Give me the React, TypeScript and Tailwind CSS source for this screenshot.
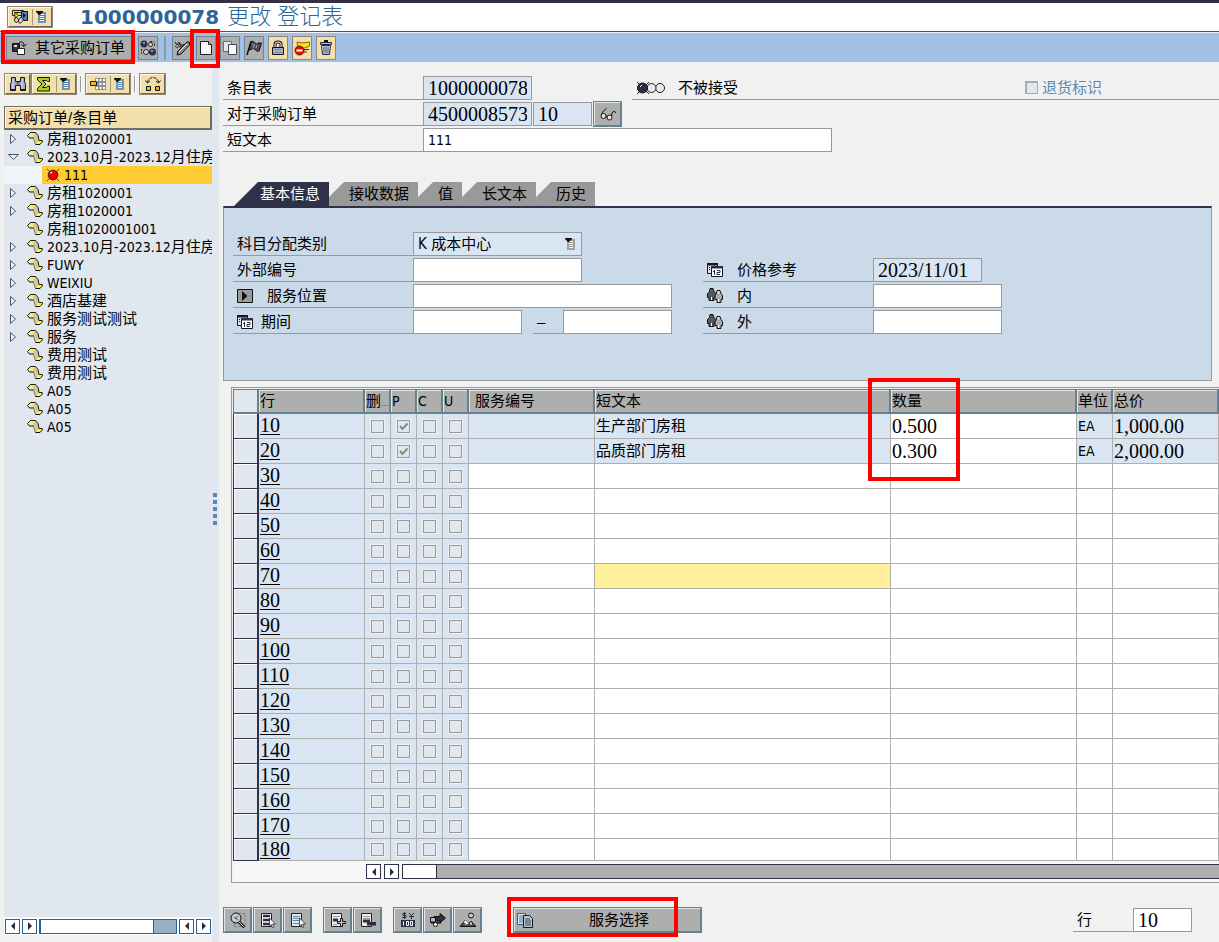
import type { ReactNode } from "react"
import clsx from "clsx"

const latinFont = "[font-family:'DejaVu_Sans_Condensed','Noto_Sans','Noto_Sans_CJK_SC',sans-serif]"
const serifFont = "[font-family:'Liberation_Serif','Noto_Sans_CJK_SC',serif]"

// latin runs are set a size smaller than the chinese around them
function Mixed({ text }: { text: string }) {
  return (
    <>
      {text.split(/([!-~]+)/).map((part, i) =>
        i % 2 ? <span key={i} className={clsx(latinFont, "text-sm leading-none")}>{part}</span> : part
      )}
    </>
  )
}

function Icon({ children, className = "size-4" }: { children: ReactNode; className?: string }) {
  return (
    <svg viewBox="0 0 16 16" className={clsx("shrink-0", className)} fill="none" aria-hidden="true">
      {children}
    </svg>
  )
}

/* ---------- icons ---------- */

const ServicesIcon = () => (
  <Icon>
    <path d="M.5 1.500h11v5H6l-3 3v-3H.5z" fill="#ffe92e" stroke="#222" />
    <path d="M2 3.500h7M2 5h4" stroke="#222" />
    <path d="M9.500 2.500h6v9h-6z" fill="#4a86bd" stroke="#111" />
    <path d="M11 4v5l3-2.500z" fill="#111" />
    <path d="M4.500 8l2.500 3-2.500 3-2.500-3zM9 8l2.500 3L8 14.500 6 12z" fill="#d5d5dd" stroke="#222" />
  </Icon>
)

const ListIcon = ({ muted = false }: { muted?: boolean }) => (
  <Icon>
    <path d="M6 4h6v9H6z" fill="#fff" stroke={muted ? "#a0a0a0" : "#6d93b5"} strokeWidth="2" />
    <path d="M7 6.500h4M7 8.500h4M7 10.500h4" stroke={muted ? "#999" : "#4d7ba5"} />
    <path d="M3 2h7v1L7 6H6L3 3z" fill="#111" />
  </Icon>
)

const OtherOrderIcon = () => (
  <Icon>
    <path d="M1.500 3.500h7v8h-7z" fill="#303048" stroke="#111" />
    <path d="M3 5h3v2H3z" fill="#ddd" />
    <path d="M6.500 8.500h7v6h-7z" fill="#fff" stroke="#222" />
    <path d="M8 2.500q4-2 5 2v2M10.500 4.500l2.500 2 2.500-2.500" stroke="#111" />
  </Icon>
)

const ToggleIcon = () => (
  <Icon>
    <circle cx="4" cy="4" r="3.500" fill="#2d3048" />
    <circle cx="12.500" cy="12" r="3.500" fill="#2d3048" />
    <circle cx="6" cy="12" r="2.500" fill="#d8dbe6" stroke="#222" />
    <circle cx="10.500" cy="4.500" r="2" fill="#d8dbe6" stroke="#222" />
    <path d="M3 3h2M11 11h2" stroke="#fff" />
    <path d="M10 1.500h3l1.500 1.500v4M1.500 9v4l1.500 1.500" stroke="#222" strokeDasharray="2 1" />
  </Icon>
)

const EditIcon = () => (
  <Icon>
    <path d="M1 2l2 3 2-3 2 4 3-2M1 6l3 2" stroke="#222" />
    <circle cx="6" cy="5.500" r="1.500" stroke="#222" />
    <path d="M15.500 2l-2.500 0-9 9-1 4 4-1 8.500-9z" fill="#8c8c9a" stroke="#111" />
    <path d="M5 12l8-8" stroke="#e5e5ea" />
  </Icon>
)

const PageIcon = () => (
  <Icon>
    <path d="M2.500 1.500h8l3 3v10h-11z" fill="#f6f8fb" stroke="#1d1d2b" />
    <path d="M10.500 1.500v3h3" fill="#bfc5ce" stroke="#1d1d2b" />
  </Icon>
)

const CopyIcon = () => (
  <Icon>
    <path d="M1.500 1.500h8v10h-8z" fill="#e4e8ee" stroke="#5a7180" />
    <path d="M6.500 4.500h8v10h-8z" fill="#f6f8fb" stroke="#3b4c58" />
  </Icon>
)

const FlagIcon = () => (
  <Icon>
    <path d="M5 1.500q2-1 4 1.500t3 0h3.500l-2.500 8q-2 1-4-1.500t-3.500 0L3 10z" fill="#4a4d64" stroke="#111" />
    <path d="M5 1.500L1 15" stroke="#111" strokeWidth="1.500" />
    <path d="M6 4l2.500.5-1.500 4M11 5l-1 3" stroke="#9aa0ac" />
  </Icon>
)

const LockIcon = () => (
  <Icon>
    <path d="M5 7V4q0-2 3-2t3 2v3" stroke="#111" strokeWidth="3" />
    <path d="M5 7V4q0-2 3-2t3 2v3" stroke="#fff" />
    <path d="M2.500 7.500h11v7h-11z" fill="#a9adc9" stroke="#111" />
    <path d="M4 9.500h8M4 12.500h8" stroke="#8286a8" />
  </Icon>
)

const RejectIcon = () => (
  <Icon>
    <path d="M3 2l6 1 6.500-1v4l-5 2H4z" fill="#ffe11a" stroke="#7d6a00" />
    <path d="M10 9.500h5M10 12h3" stroke="#333" />
    <circle cx="5.500" cy="10.500" r="4.500" fill="#e01010" stroke="#8a0000" />
    <path d="M2.500 9.500h6v2h-6z" fill="#fff" />
  </Icon>
)

const TrashIcon = () => (
  <Icon>
    <path d="M6 1h4" stroke="#111" strokeWidth="2" />
    <path d="M2.500 2.500h11v2h-11z" fill="#b9bdd2" stroke="#222b4a" />
    <path d="M3.500 5.500h9l-1 9h-7z" fill="#dfe3ee" stroke="#222b4a" />
    <path d="M6 6.500v7M8 6.500v7M10 6.500v7" stroke="#39425f" />
  </Icon>
)

const BinocularsIcon = () => (
  <Icon>
    <path d="M1.500 1.500h4v4h5v-4h4v4l1 3v6h-5v-5h-5v5h-5v-6l1-3z" fill="#a3abd2" stroke="#16161f" />
    <path d="M3 3v11M12 3v11" stroke="#d9ddf2" />
    <path d="M6.500 6h3v2.500h-3z" fill="#5b6184" />
    <path d="M1 13.500h4.500M10.500 13.500h4.500" stroke="#16161f" />
  </Icon>
)

const SigmaIcon = () => (
  <Icon>
    <path d="M1.500 1.500h12v4h-2l-1-1h-4l3.500 3.500-3.500 3.500h4l1-1.500h2v5h-12v-2.500l4.500-4.500-4.500-4z" fill="#a8cf28" stroke="#111c00" />
  </Icon>
)

const GridIcon = () => (
  <Icon>
    <path d="M5 2h11v12H5z" fill="#8d8f96" />
    <path d="M6 3h2v2H6zM9.500 3h2v2h-2zM13 3h2v2h-2zM6 11h2v2H6zM9.500 11h2v2h-2zM13 11h2v2h-2zM9.500 7h2v2h-2zM13 7h2v2h-2z" fill="#fff" />
    <path d="M.5 5.500h6v4h-6z" fill="#ffb400" stroke="#222" />
  </Icon>
)

const SwapIcon = () => (
  <Icon>
    <path d="M2.500 6q1-4 5.500-4.500 4.500.5 5.500 4.500" stroke="#111" strokeDasharray="3 1" />
    <path d="M.5 4.500l2 2.500 2.500-2M11 5l2.500 2 2-2.500" stroke="#111" />
    <path d="M1.500 10.500h4v4h-4z" fill="#b5dc2c" stroke="#111" />
    <path d="M10.500 10.500h4v4h-4z" fill="#ffa400" stroke="#111" />
  </Icon>
)

const ScrollIcon = () => (
  <Icon>
    <path d="M6 2l3 .5 2 3.500 1 4-3 3.500-1.500-5-1.500-2.500z" fill="#d3cb97" />
    <path d="M6.500 6L7 9l1.500 4.500" stroke="#77734e" />
    <path d="M1 4.500l3-3h4L6 4l.5 2-2-1.500z" fill="#fff63a" />
    <path d="M9 13.500l2.500-3.500 4-.5-2 3.500z" fill="#fff63a" />
    <path d="M.5 4.500l3-3h5l2.500 3 1 5h3.500M.5 4.500l2 2.500H6M8.500 13.500h4.500l3-3.500" stroke="#111" />
  </Icon>
)

const RedBallIcon = () => (
  <Icon className="size-3.5">
    <path d="M1 1l14 14M15 1L1 15" stroke="#333" />
    <circle cx="8" cy="8" r="5.500" fill="#f00000" stroke="#4a0000" />
    <path d="M5 6l2-1.500" stroke="#fff" strokeWidth="1.500" />
  </Icon>
)

const LightsIcon = () => (
  <svg viewBox="0 0 30 14" className="h-3.5 w-[30px]" fill="none" aria-hidden="true">
    <path d="M1 1l12 12M13 1L1 13" stroke="#222" />
    <circle cx="24" cy="7" r="4.500" fill="#e7eaef" stroke="#222" />
    <circle cx="15.500" cy="7" r="4.500" fill="#e7eaef" stroke="#222" />
    <circle cx="6.500" cy="7" r="5" fill="#2b2e45" stroke="#111" />
    <path d="M4 6l2-2" stroke="#fff" />
  </svg>
)

const GlassesIcon = () => (
  <Icon>
    <circle cx="3.500" cy="10" r="2.500" fill="#e8e8e8" stroke="#111" />
    <circle cx="9.500" cy="11.500" r="2.500" fill="#e8e8e8" stroke="#111" />
    <path d="M1.500 8q1-3 5-5.500M11.500 10q0-4 2-4.500t2 1.500M6 10l1.500 1" stroke="#111" />
  </Icon>
)

const CalendarIcon = () => (
  <Icon>
    <path d="M.5 1.500h10v10H.5z" fill="#dfe3ec" stroke="#16161f" />
    <path d="M0 1h11v2.500H0zM2 5h1v1H2zM2 7h1v1H2z" fill="#16161f" />
    <path d="M4.500 4.500h11v10h-11z" fill="#fff" stroke="#16161f" />
    <path d="M4 4h12v2.500H4z" fill="#2b2e45" />
    <path d="M7.500 8v5M6 9.500h1.500M10 8.500h3v2h-3v2h3" stroke="#2b2e45" />
  </Icon>
)

const PeopleIcon = () => (
  <Icon>
    <path d="M3 .5h3l1 3 2 2v4H7v3H2v-3H.5v-4l2-2z" fill="#55575f" stroke="#111" />
    <path d="M10 2.500h3l1 3 1.500 2v4H14v3h-4v-3H8v-4l1.500-2z" fill="#a9abb2" stroke="#111" />
    <path d="M4.500 9v3M11.500 11v3" stroke="#fff" />
    <path d="M10.500 3.500h2v2h-2z" fill="#f1efe7" />
  </Icon>
)

const PlayIcon = () => (
  <Icon>
    <path d="M.5 1.500h15v13H.5z" fill="#9b9b99" stroke="#111" />
    <path d="M5 3v10l5.500-5z" fill="#111" />
  </Icon>
)

const DetailIcon = () => (
  <Icon>
    <path d="M4 1.500h11v13H4z" stroke="#6c8795" strokeDasharray="3 1" />
    <path d="M8 9l6.500 6.500" stroke="#111" strokeWidth="3" />
    <path d="M9 10l5.500 5.500" stroke="#e5e5e5" />
    <circle cx="6" cy="6" r="5" fill="#c3c8cc" stroke="#111" />
    <path d="M4 5l4 3M5 7l3-3" stroke="#556" />
  </Icon>
)

const SelectAllIcon = ({ dark = false }: { dark?: boolean }) => (
  <Icon>
    <path d="M1.500 1.500h10v13h-10z" fill={dark ? "#fff" : "#dfe9f1"} stroke="#222" />
    {dark
      ? <path d="M3 4h7M3 8h7M3 12h6" stroke="#2b2e45" strokeWidth="2.500" />
      : <path d="M3 4.500h7M3 6.500h7M3 8.500h7M3 11.500h6" stroke="#5d87a4" />}
    <path d="M9.500 6l6 6h-3l1.500 3-1.500.5-1.500-3-1.500 1.500z" fill="#fff" stroke="#111" strokeWidth=".7" />
  </Icon>
)

const InsertRowIcon = () => (
  <Icon>
    <path d="M1.500 1.500h10v13h-10z" fill="#e9ebee" stroke="#222" />
    <path d="M3 4.500h7M3 12.500h4" stroke="#9a9ca3" />
    <path d="M3 8h5" stroke="#2b2e45" strokeWidth="3" />
    <path d="M10.500 6.500h2v3h3v2h-3v3h-2v-3h-3v-2h3z" fill="#c7c9cd" stroke="#111" />
  </Icon>
)

const DeleteRowIcon = () => (
  <Icon>
    <path d="M1.500 1.500h10v13h-10z" fill="#e9ebee" stroke="#222" />
    <path d="M3 4.500h7M3 6.500h7" stroke="#9a9ca3" />
    <path d="M3 9h7" stroke="#2b2e45" strokeWidth="3" />
    <path d="M7 10h9v3.500H7z" fill="#2b2e45" />
  </Icon>
)

const CurrencyIcon = () => (
  <Icon>
    <path d="M6 1.500H3v2h3v2H2M4.500 0v7M9 1l2.500 2.500L14 1M11.500 3v4M9 4.500h5" stroke="#2b2e45" />
    <path d="M1 8h14v7H1z" fill="#2b2e45" />
    <path d="M3.500 9.500v4M6.500 9.500h2v4h-2zM10.500 9.500h2v4h-2z" stroke="#fff" />
  </Icon>
)

const TransportIcon = () => (
  <Icon>
    <path d="M4 4.500h6v-3l5.500 4.500L10 11V8.500H4z" fill="#2b2e45" stroke="#111" />
    <path d="M.5 5.500h5v5h-5z" fill="#b7babf" stroke="#111" />
    <path d="M1 10.500h10" stroke="#111" strokeWidth="2" />
    <circle cx="5.500" cy="12.500" r="2" fill="#fff" stroke="#111" />
  </Icon>
)

const MountainIcon = () => (
  <Icon>
    <circle cx="11" cy="3.500" r="2.500" fill="#c8cbd3" stroke="#111" />
    <path d="M0 14.500L5.500 8l3 3.500L11 9l5 5.500z" fill="#4a4d5c" stroke="#111" />
    <path d="M5.500 8l-2 3h2v2l3-1.500M11 9l-1 3 2 1" fill="#fff" />
  </Icon>
)

const DocumentsIcon = () => (
  <Icon>
    <path d="M.5 1.500h8v11h-8z" fill="#dfe9f1" stroke="#2f5d80" />
    <path d="M2 4h5M2 6h5M2 8h5M2 10h5" stroke="#4d7ba5" />
    <path d="M6.500 3.500h6l3 3v9h-9z" fill="#b8c6d2" stroke="#16161f" />
    <path d="M8 7h5M8 9h6M8 11h6M8 13h6" stroke="#2f4a60" />
  </Icon>
)

/* ---------- small parts ---------- */

function GoldButton({ label, className, children }: { label: string; className?: string; children: ReactNode }) {
  return (
    <button
      aria-label={label}
      className={clsx("flex h-[22px] items-center justify-center border-2 border-t-[#fff8dc] border-l-[#fff8dc] border-r-[#6b675c] border-b-[#6b675c] bg-[#f2dfac] outline outline-[#8d8878] -outline-offset-1", className)}
    >
      {children}
    </button>
  )
}

// gold button with a list drop-down glued on its right
function SplitButton({ label, children }: { label: string; children: ReactNode }) {
  return (
    <GoldButton label={label} className="w-[46px]">
      <span className="flex w-6 justify-center">{children}</span>
      <span className="flex w-5 border-l border-[#a39a7c]"><ListIcon /></span>
    </GoldButton>
  )
}

function BarButton({ label, gold, children }: { label: string; gold?: boolean; children: ReactNode }) {
  return (
    <button
      aria-label={label}
      className={clsx("flex h-6 w-5 items-center justify-center border", gold ? "border-[#8d8878] bg-[#f2dfac]" : "border-[#6f8795] bg-[#aeaeac]")}
    >
      {children}
    </button>
  )
}

function FootButton({ label, children }: { label: string; children: ReactNode }) {
  return (
    <button aria-label={label} className="flex h-[26px] w-[29px] items-center justify-center border-2 border-t-[#dfe7ec] border-l-[#dfe7ec] border-r-[#64818f] border-b-[#64818f] bg-[#aeaeac] outline outline-[#64818f] -outline-offset-1">
      {children}
    </button>
  )
}

function Highlight({ className }: { className: string }) {
  return <span className={clsx("pointer-events-none absolute z-10 border-4 border-[#ff0000]", className)} />
}

function ArrowButton({ dir, dark }: { dir: "left" | "right"; dark?: boolean }) {
  return (
    <button aria-label={dir} className={clsx("flex size-[15px] shrink-0 items-center justify-center border bg-white", dark ? "border-[#2f3148]" : "border-[#2c6090]")}>
      <svg viewBox="0 0 8 8" className="size-2" aria-hidden="true">
        <path d={dir === "left" ? "M6 0v8L2 4z" : "M2 0v8l4-4z"} fill="#2b2e45" />
      </svg>
    </button>
  )
}

interface FieldProps {
  id: string
  label: string
  value?: string
  readOnly?: boolean
  latin?: boolean
  className: string
}

function Field({ id, label, value = "", readOnly, latin, className }: FieldProps) {
  return (
    <input
      id={id}
      aria-label={label}
      defaultValue={value}
      readOnly={readOnly}
      className={clsx(
        "h-6 border border-[#999] px-1 text-black",
        latin ? "text-sm" : "text-xl",
        latin ? latinFont : serifFont,
        readOnly ? "bg-[#d9e5f3]" : "bg-white",
        className
      )}
    />
  )
}

function Label({ htmlFor, className, children }: { htmlFor: string; className: string; children: ReactNode }) {
  return (
    <label htmlFor={htmlFor} className={clsx("flex h-6 items-center border-b border-[#999]", className)}>
      {children}
    </label>
  )
}

/* ---------- left: tree ---------- */

interface TreeRow {
  text: string
  state?: "closed" | "open" | "selected"
}

const treeRows: TreeRow[] = [
  { text: "房租1020001", state: "closed" },
  { text: "2023.10月-2023.12月住房", state: "open" },
  { text: "111", state: "selected" },
  { text: "房租1020001", state: "closed" },
  { text: "房租1020001", state: "closed" },
  { text: "房租1020001001" },
  { text: "2023.10月-2023.12月住房", state: "closed" },
  { text: "FUWY", state: "closed" },
  { text: "WEIXIU", state: "closed" },
  { text: "酒店基建", state: "closed" },
  { text: "服务测试测试", state: "closed" },
  { text: "服务", state: "closed" },
  { text: "费用测试" },
  { text: "费用测试" },
  { text: "A05" },
  { text: "A05" },
  { text: "A05" },
]

function TreeItem({ row }: { row: TreeRow }) {
  if (row.state === "selected") {
    return (
      <li className="flex h-[18px] bg-[#f1f4f8] pl-[38px]">
        <span className="flex grow items-center gap-1 bg-[#ffcb32] pl-1">
          <RedBallIcon />
          <Mixed text={row.text} />
        </span>
      </li>
    )
  }
  return (
    <li className="flex h-[18px] items-center overflow-hidden whitespace-nowrap pl-1">
      <svg viewBox="0 0 12 12" className="size-3 shrink-0" fill="#eef2f6" stroke="#4b5568" aria-hidden="true">
        {row.state === "closed" && <path d="M2.500 1.500v9l5-4.500z" />}
        {row.state === "open" && <path d="M.5 3.500h10l-5 5z" />}
      </svg>
      <span className="ml-[7px] mr-1 flex"><ScrollIcon /></span>
      <span className="leading-[18px]"><Mixed text={row.text} /></span>
    </li>
  )
}

function SidePanel() {
  return (
    <aside className="flex w-[212px] shrink-0 flex-col pb-[7px] pl-1">
      <div className="flex h-11 items-center">
        <GoldButton label="查找" className="w-[27px]"><BinocularsIcon /></GoldButton>
        <SplitButton label="合计"><SigmaIcon /></SplitButton>
        <span className="mx-[3px] h-4 w-0.5 border-l border-[#999] bg-white" />
        <SplitButton label="布局"><GridIcon /></SplitButton>
        <span className="mx-[3px] h-4 w-0.5 border-l border-[#999] bg-white" />
        <GoldButton label="切换" className="w-[27px]"><SwapIcon /></GoldButton>
      </div>
      <div className="flex h-6 items-center border border-r-2 border-b-2 border-[#6e6c63] bg-[#f2dfac] pl-[3px] shadow-[inset_1px_1px_0_#fff8dc]">
        采购订单/条目单
      </div>
      <ul className="grow bg-[#e0e7ee]">
        {treeRows.map((row, i) => <TreeItem key={i} row={row} />)}
      </ul>
      <div className="flex h-[18px] items-center gap-0.5 bg-white px-px">
        <ArrowButton dir="left" />
        <ArrowButton dir="right" />
        <div className="flex h-[15px] grow border border-l-2 border-[#2c6090] bg-white">
          <span className="grow" />
          <span className="w-[23px] border-l border-[#2c6090] bg-[#95b0c3]" />
        </div>
        <ArrowButton dir="left" />
        <ArrowButton dir="right" />
      </div>
    </aside>
  )
}

/* ---------- right: header fields and tabs ---------- */

function EntryHeader() {
  return (
    <div className="flex flex-col gap-0.5">
      <div className="flex">
        <Label htmlFor="entry" className="w-[200px] pl-1">条目表</Label>
        <Field id="entry" label="条目表" value="1000000078" readOnly className="w-[109px]" />
        <div className="ml-[100px] flex h-6 grow items-center border-b border-[#999] pl-1">
          <LightsIcon />
          <span className="ml-3">不被接受</span>
          <label className="ml-auto mr-[117px] flex items-center gap-1 text-[#5a88b3]">
            <input type="checkbox" disabled className="size-[13px] appearance-none border border-t-2 border-l-2 border-[#aaa] bg-[#e0e7ee]" />
            退货标识
          </label>
        </div>
      </div>
      <div className="flex h-6 items-center">
        <Label htmlFor="order" className="w-[200px] pl-1">对于采购订单</Label>
        <Field id="order" label="对于采购订单" value="4500008573" readOnly className="w-[109px]" />
        <Field id="item" label="项目" value="10" readOnly className="ml-px mr-px w-[59px]" />
        <FootButton label="显示采购订单"><GlassesIcon /></FootButton>
      </div>
      <div className="flex">
        <Label htmlFor="short" className="w-[200px] pl-1">短文本</Label>
        <Field id="short" label="短文本" value="111" latin className="w-[409px]" />
      </div>
    </div>
  )
}

const tabs = ["基本信息", "接收数据", "值", "长文本", "历史"]

function BasicData() {
  return (
    <div className="mr-[7px] flex h-[175px] gap-[31px] border border-[#999] border-t-2 border-t-[#2f3148] bg-[#cbdae8] pt-6 pl-[9px]">
      <div className="flex flex-col gap-0.5">
        <div className="flex">
          <Label htmlFor="category" className="w-[180px] pl-1">科目分配类别</Label>
          <div className="relative">
            <select id="category" className={clsx(latinFont, "h-6 w-[169px] appearance-none border border-[#999] bg-[#d9e5f3] pl-1 text-[15px]")}>
              <option>K 成本中心</option>
            </select>
            <span className="pointer-events-none absolute top-1 right-1"><ListIcon muted /></span>
          </div>
        </div>
        <div className="flex">
          <Label htmlFor="external" className="w-[180px] pl-1">外部编号</Label>
          <Field id="external" label="外部编号" className="w-[169px]" />
        </div>
        <div className="flex">
          <Label htmlFor="location" className="w-[180px] gap-[14px] pl-1"><PlayIcon />服务位置</Label>
          <Field id="location" label="服务位置" className="w-[259px]" />
        </div>
        <div className="flex">
          <Label htmlFor="from" className="w-[180px] gap-2 pl-1"><CalendarIcon />期间</Label>
          <Field id="from" label="期间从" className="w-[109px]" />
          <Label htmlFor="to" className="ml-[11px] w-[30px] pl-1">–</Label>
          <Field id="to" label="期间到" className="w-[109px]" />
        </div>
      </div>
      <div className="flex flex-col gap-0.5 pt-[26px]">
        <div className="flex">
          <Label htmlFor="price" className="w-[170px] gap-[14px] pl-1"><CalendarIcon />价格参考</Label>
          <Field id="price" label="价格参考" value="2023/11/01" readOnly className="w-[109px]" />
        </div>
        <div className="flex">
          <Label htmlFor="inner" className="w-[170px] gap-[14px] pl-1"><PeopleIcon />内</Label>
          <Field id="inner" label="内" className="w-[129px]" />
        </div>
        <div className="flex">
          <Label htmlFor="outer" className="w-[170px] gap-[14px] pl-1"><PeopleIcon />外</Label>
          <Field id="outer" label="外" className="w-[129px]" />
        </div>
      </div>
    </div>
  )
}

/* ---------- right: service lines ---------- */

interface Line {
  no: number
  text?: string
  qty?: string
  unit?: string
  total?: string
}

const lines: Line[] = Array.from({ length: 18 }, (_, i) => ({ no: (i + 1) * 10 }))
lines[0] = { no: 10, text: "生产部门房租", qty: "0.500", unit: "EA", total: "1,000.00" }
lines[1] = { no: 20, text: "品质部门房租", qty: "0.300", unit: "EA", total: "2,000.00" }

const columns = [
  { title: "", className: "w-[26px] border-l bg-[#e0e7ee]" },
  { title: "行", className: "w-[106px] bg-[#aeaeac] pl-px" },
  { title: "删", cut: true, className: "w-[26px] bg-[#aeaeac] pl-px" },
  { title: "P", className: "w-[26px] bg-[#aeaeac] pl-px" },
  { title: "C", className: "w-[26px] bg-[#aeaeac] pl-px" },
  { title: "U", className: "w-[26px] bg-[#aeaeac] pl-px" },
  { title: "服务编号", className: "w-[126px] bg-[#aeaeac] pl-[6px]" },
  { title: "短文本", className: "w-[296px] bg-[#aeaeac] pl-px" },
  { title: "数量", className: "w-[186px] bg-[#aeaeac] pl-px" },
  { title: "单位", className: "w-[36px] bg-[#aeaeac] pl-px" },
  { title: "总价", className: "bg-[#aeaeac] pl-px" },
]

function LineRow({ line, last }: { line: Line; last: boolean }) {
  const filled = Boolean(line.text)
  const cell = "overflow-hidden whitespace-nowrap border-r border-b border-[#aeaeac] py-0 pr-0 pl-px"
  const lock = filled ? "bg-[#d9e5f3]" : "bg-white"
  return (
    <tr className={last ? "h-[22px]" : "h-[25px]"}>
      <td className="border-r-2 border-b border-l border-[#2f3148] bg-[#e0e7ee] p-0 shadow-[inset_1px_1px_0_#fff]" />
      <td className={clsx(cell, "bg-[#d9e5f3]")}>
        <a href="#" className={clsx(serifFont, "block w-fit border-b border-black text-xl leading-[17px] text-black")}>{line.no}</a>
      </td>
      {["删除", "P", "C", "U"].map((name) => (
        <td key={name} className="border-r border-b border-[#aeaeac] bg-[#d9e5f3] p-0">
          <span className="grid place-items-center">
            <input
              type="checkbox"
              aria-label={`${line.no} ${name}`}
              defaultChecked={filled && name === "P"}
              className="peer col-start-1 row-start-1 size-[13px] appearance-none border border-[#999] bg-[#e0e7ee] outline outline-[#f1f1f1]"
            />
            <svg viewBox="0 0 9 9" className="pointer-events-none invisible col-start-1 row-start-1 size-[9px] peer-checked:visible" fill="none" stroke="#8a8a88" strokeWidth="2" aria-hidden="true">
              <path d="M1 4l2.500 3L8.500 1.500" />
            </svg>
          </span>
        </td>
      ))}
      <td className={clsx(cell, lock)} />
      <td className={clsx(cell, line.no === 70 ? "bg-[#fff09c]" : lock)}>{line.text}</td>
      <td className={clsx(cell, serifFont, "bg-white text-xl leading-5")}>{line.qty}</td>
      <td className={clsx(cell, latinFont, "text-sm", lock)}>{line.unit}</td>
      <td className={clsx(cell, serifFont, "text-xl leading-5", lock)}>{line.total}</td>
    </tr>
  )
}

function ServiceTable() {
  return (
    <div className="relative ml-2 mt-[6px] border border-r-0 border-[#999] pt-px pl-px">
      <table className="w-full table-fixed border-separate border-spacing-0">
        <thead>
          <tr className="h-[25px]">
            {columns.map((col, i) => (
              <th
                key={i}
                scope="col"
                className={clsx(
                  "overflow-hidden whitespace-nowrap border-t border-r-2 border-b-2 border-[#64818f] py-0 text-left font-normal leading-5 shadow-[inset_1px_1px_0_#dfe7ec]",
                  col.className
                )}
              >
                <Mixed text={col.title} />
                {col.cut && <span className="text-[8px] leading-none [font-family:'Liberation_Sans',sans-serif]">…</span>}
              </th>
            ))}
          </tr>
        </thead>
        <tbody>
          {lines.map((line, i) => <LineRow key={line.no} line={line} last={i === lines.length - 1} />)}
        </tbody>
      </table>
      <div className="flex h-[21px] items-center gap-[3px] bg-[#f7f7f7] pl-[133px]">
        <ArrowButton dir="left" dark />
        <ArrowButton dir="right" dark />
        <div className="flex h-[15px] grow border border-r-0 border-[#2f3148] bg-[#aeaeac]">
          <span className="w-[34px] border-r border-[#2f3148] bg-white" />
        </div>
      </div>
      <Highlight className="-top-[10px] left-[636px] h-[103px] w-[92px]" />
    </div>
  )
}

function Footer() {
  return (
    <div className="flex items-center pt-6 pb-2">
      <div className="flex gap-px">
        <FootButton label="明细"><DetailIcon /></FootButton>
        <FootButton label="全选"><SelectAllIcon dark /></FootButton>
        <FootButton label="取消全选"><SelectAllIcon /></FootButton>
      </div>
      <div className="ml-[11px] flex gap-px">
        <FootButton label="插入行"><InsertRowIcon /></FootButton>
        <FootButton label="删除行"><DeleteRowIcon /></FootButton>
      </div>
      <div className="ml-[11px] flex gap-px">
        <FootButton label="条件"><CurrencyIcon /></FootButton>
        <FootButton label="科目分配"><TransportIcon /></FootButton>
        <FootButton label="大纲"><MountainIcon /></FootButton>
      </div>
      <div className="relative ml-[31px]">
        <button className="flex h-[26px] w-[189px] items-center border-2 border-t-[#dfe7ec] border-l-[#dfe7ec] border-r-[#64818f] border-b-[#64818f] bg-[#aeaeac] pl-0.5 outline outline-[#64818f] -outline-offset-1">
          <DocumentsIcon />
          <span className="ml-14">服务选择</span>
        </button>
        <Highlight className="-top-[10px] -left-[6px] h-10 w-[171px]" />
      </div>
      <div className="ml-auto mr-[27px] flex">
        <Label htmlFor="line" className="w-[60px] pl-1">行</Label>
        <Field id="line" label="行" value="10" className="w-[59px]" />
      </div>
    </div>
  )
}

export default function App() {
  return (
    <div className="flex min-h-screen flex-col overflow-hidden bg-[#f1f1f1] text-[15px] leading-5 text-black [font-family:'Liberation_Sans','Noto_Sans_CJK_SC',sans-serif]">
      <header className="flex h-8 items-center border-t-[3px] border-b border-t-[#332f45] border-b-[#2c6090] bg-white pl-[7px]">
        <SplitButton label="服务"><ServicesIcon /></SplitButton>
        <h1 className="ml-[27px] flex items-center text-[#2f6496]">
          <span className="text-xl font-bold [font-family:'DejaVu_Sans',sans-serif]">1000000078</span>
          <span className="ml-2 text-[22px] font-light leading-7">更改 登记表</span>
        </h1>
      </header>

      <nav className="mt-px flex h-[29px] items-center gap-1 bg-[#a3c0e4] pl-[6px]">
        <div className="relative">
          <button className="flex h-6 w-[128px] items-center gap-2 border border-[#6f8795] bg-[#aeaeac] pl-1">
            <OtherOrderIcon />
            其它采购订单
          </button>
          <Highlight className="-top-[6px] -left-[5px] h-[34px] w-[134px]" />
        </div>
        <BarButton label="切换"><ToggleIcon /></BarButton>
        <span className="mx-0.5 h-6 w-0.5 bg-[#8c9aa8]" />
        <BarButton label="显示/更改"><EditIcon /></BarButton>
        <div className="relative">
          <BarButton label="创建"><PageIcon /></BarButton>
          <Highlight className="-top-[7px] -left-[6px] h-[39px] w-[30px]" />
        </div>
        <BarButton label="复制"><CopyIcon /></BarButton>
        <BarButton label="接受"><FlagIcon /></BarButton>
        <BarButton label="锁定" gold><LockIcon /></BarButton>
        <BarButton label="拒绝" gold><RejectIcon /></BarButton>
        <BarButton label="删除" gold><TrashIcon /></BarButton>
      </nav>

      <div className="flex grow">
        <SidePanel />
        <div className="flex w-[7px] shrink-0 flex-col items-start justify-center gap-[3px] bg-[#e0e7ee] pt-3.5 pl-px">
          {[0, 1, 2, 3, 4].map((dot) => <span key={dot} className="size-1 bg-[#5a88b3]" />)}
        </div>
        <main className="min-w-0 grow pl-1 pt-[14px]">
          <EntryHeader />
          <div role="tablist" className="mt-[30px] flex pl-[11px]">
            {tabs.map((tab, i) => (
              <button
                key={tab}
                role="tab"
                aria-selected={i === 0}
                className={clsx(
                  "h-6 pr-[9px]",
                  i === 0
                    ? "bg-[#2f3148] pl-[26px] text-white [clip-path:polygon(0_100%,24px_0,100%_0,100%_100%)]"
                    : "bg-[#999] pl-5 [clip-path:polygon(0_15px,15px_0,100%_0,100%_100%,0_100%)]"
                )}
              >
                {tab}
              </button>
            ))}
          </div>
          <BasicData />
          <ServiceTable />
          <Footer />
        </main>
      </div>
    </div>
  )
}
